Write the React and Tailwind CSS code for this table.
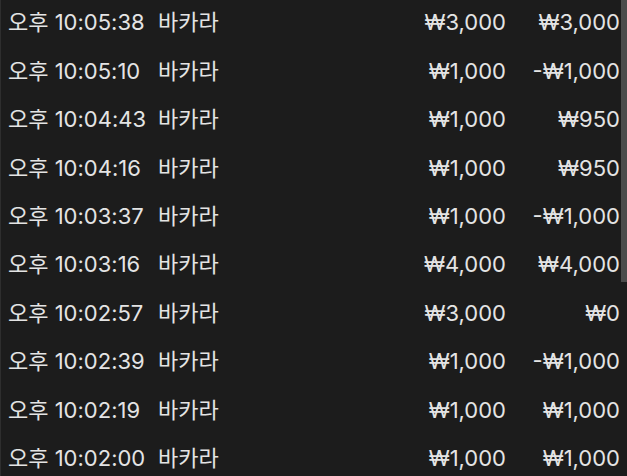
import React from 'react';

const rows = [
  { time: '오후 10:05:38', game: '바카라', bet: '₩3,000', result: '₩3,000' },
  { time: '오후 10:05:10', game: '바카라', bet: '₩1,000', result: '-₩1,000' },
  { time: '오후 10:04:43', game: '바카라', bet: '₩1,000', result: '₩950' },
  { time: '오후 10:04:16', game: '바카라', bet: '₩1,000', result: '₩950' },
  { time: '오후 10:03:37', game: '바카라', bet: '₩1,000', result: '-₩1,000' },
  { time: '오후 10:03:16', game: '바카라', bet: '₩4,000', result: '₩4,000' },
  { time: '오후 10:02:57', game: '바카라', bet: '₩3,000', result: '₩0' },
  { time: '오후 10:02:39', game: '바카라', bet: '₩1,000', result: '-₩1,000' },
  { time: '오후 10:02:19', game: '바카라', bet: '₩1,000', result: '₩1,000' },
  { time: '오후 10:02:00', game: '바카라', bet: '₩1,000', result: '₩1,000' },
];

const App = () => {
  return (
    <div
      className="relative w-[627px] h-[476px] overflow-hidden bg-[#1c1c1c] border-l border-[#2e2e2e] text-[#e4e4e4]"
      style={{ fontFamily: '"Inter", "Noto Sans CJK KR", sans-serif' }}
    >
      <div className="-mt-[2px] pr-[7px]">
        {rows.map((row, i) => (
          <div key={i} className="flex items-center h-[48.45px] text-[22px] leading-none">
            <span className="w-[157px] shrink-0 pl-[7px] whitespace-nowrap">{row.time}</span>
            <span className="whitespace-nowrap">{row.game}</span>
            <span className="flex-1 text-right whitespace-nowrap">{row.bet}</span>
            <span className="w-[114px] shrink-0 text-right whitespace-nowrap">{row.result}</span>
          </div>
        ))}
      </div>

      {/* scrollbar thumb overlays the list */}
      <div className="absolute top-0 right-0 z-10 w-[6px] h-[282px] bg-[#4b4b4b]"></div>
    </div>
  );
};

export default App;
